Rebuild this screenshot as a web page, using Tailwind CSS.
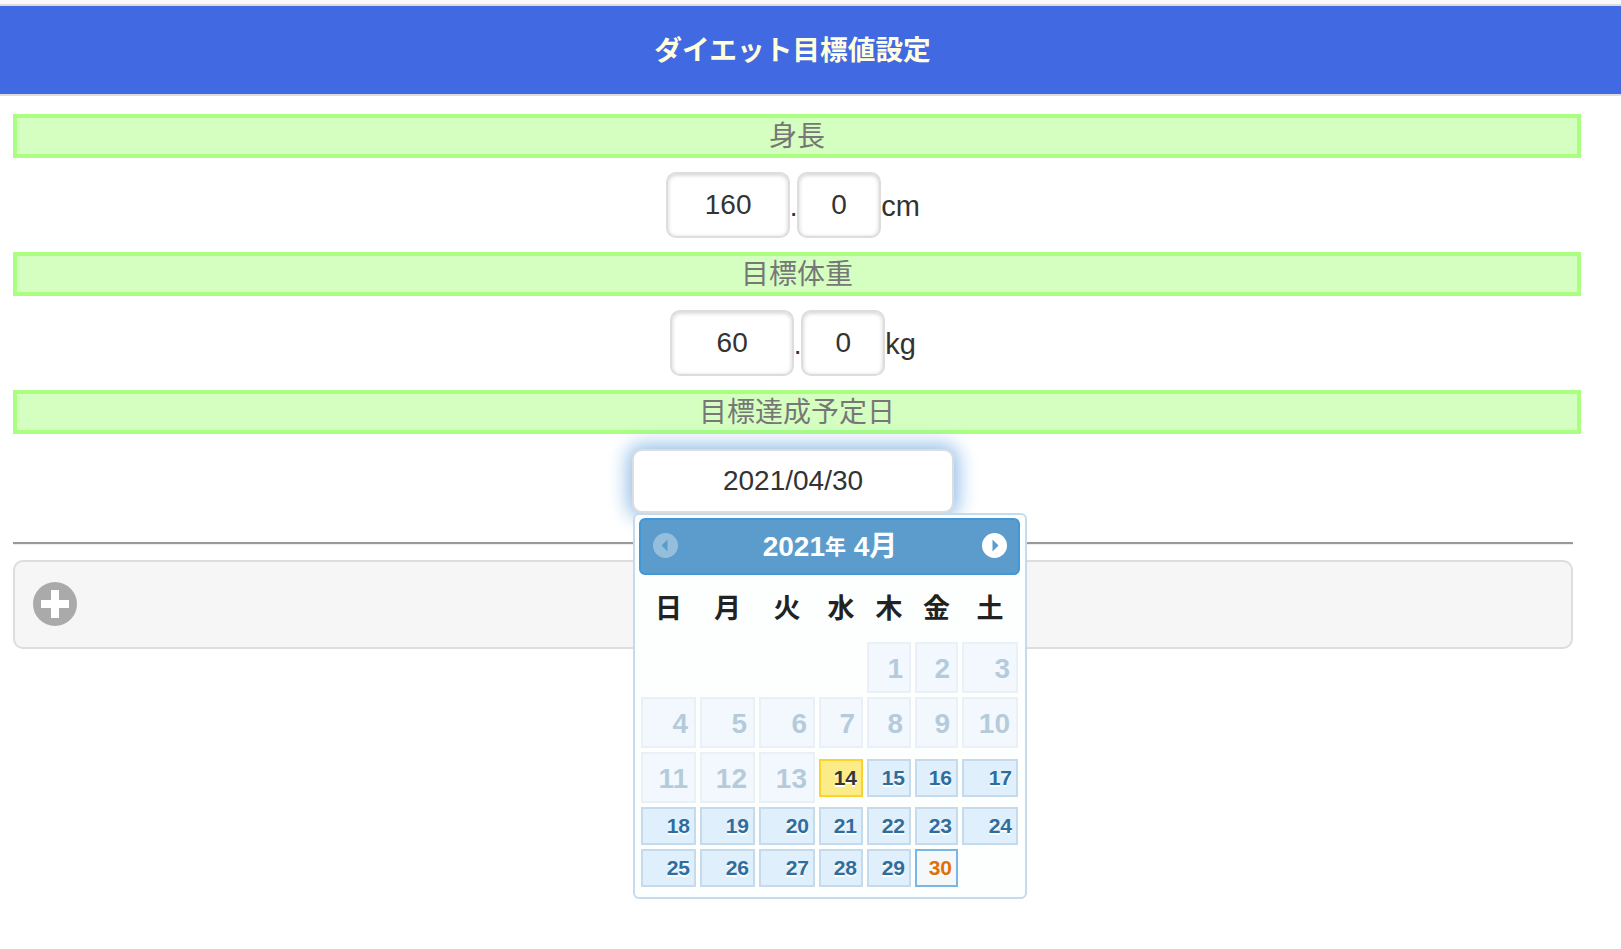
<!DOCTYPE html>
<html lang="ja">

<head>
    <meta charset="UTF-8">
    <meta name="viewport" content="width=device-width, initial-scale=1.0">
    <title>ダイエット目標値設定</title>
    <script src="https://cdn.jsdelivr.net/npm/@tailwindcss/browser@4"></script>
</head>

<body class="min-h-[949px] bg-white text-[28px] text-[#333] [font-family:'Liberation_Sans','Noto_Sans_CJK_JP',sans-serif]">
    <!-- Header -->
    <div class="h-1 bg-[#f9f9f9]"></div>
    <header class="flex h-[92px] items-center justify-center border-y-2 border-[#ddd] bg-[#4169e1] pr-[36px] pt-0.5">
        <h1 class="text-[27.7px] font-bold text-[#ffffe0]">ダイエット目標値設定</h1>
    </header>

    <!-- Main Content -->
    <main class="relative h-[853px] w-[1586px] pt-[18px]">
        <div class="ml-[13px] flex h-[44px] w-[1568px] items-center justify-center border-4 border-[#aaff80] bg-[#d5ffc0] pt-0.5 text-[#777]">身長</div>
        <div class="mt-[14px] flex h-[66px] items-center justify-center">
            <div class="flex h-full w-[124px] items-center justify-center rounded-[10px] border-2 border-[#ddd] bg-white shadow-[inset_0_1px_4px_rgba(0,0,0,0.2)]">160</div>
            <span class="flex h-full w-[7px] items-center justify-center pt-1">.</span>
            <div class="flex h-full w-[84px] items-center justify-center rounded-[10px] border-2 border-[#ddd] bg-white shadow-[inset_0_1px_4px_rgba(0,0,0,0.2)]">0</div>
            <span class="pt-1 text-[29px]">cm</span>
        </div>

        <div class="ml-[13px] mt-[14px] flex h-[44px] w-[1568px] items-center justify-center border-4 border-[#aaff80] bg-[#d5ffc0] pt-0.5 text-[#777]">目標体重</div>
        <div class="mt-[14px] flex h-[66px] items-center justify-center">
            <div class="flex h-full w-[124px] items-center justify-center rounded-[10px] border-2 border-[#ddd] bg-white shadow-[inset_0_1px_4px_rgba(0,0,0,0.2)]">60</div>
            <span class="flex h-full w-[7px] items-center justify-center pt-1">.</span>
            <div class="flex h-full w-[84px] items-center justify-center rounded-[10px] border-2 border-[#ddd] bg-white shadow-[inset_0_1px_4px_rgba(0,0,0,0.2)]">0</div>
            <span class="pt-1 text-[29px]">kg</span>
        </div>

        <div class="ml-[13px] mt-[14px] flex h-[44px] w-[1568px] items-center justify-center border-4 border-[#aaff80] bg-[#d5ffc0] pt-0.5 text-[#777]">目標達成予定日</div>
        <div class="mt-[15px] flex justify-center">
            <div class="flex h-[64px] w-[322px] items-center justify-center rounded-[10px] border-2 border-[#ddd] bg-white shadow-[0_0_20px_4px_#8dbce8]">2021/04/30</div>
        </div>

        <hr class="ml-[13px] mt-[29px] w-[1560px] border-t-2 border-b border-t-[#999] border-b-[#eee]">

        <!-- Collapsible -->
        <div class="ml-[13px] mt-[15px] flex h-[89px] w-[1560px] items-center rounded-[10px] border-2 border-[#ddd] bg-[#f6f6f6] pb-0.5 pl-[18px]">
            <svg width="44" height="44" viewBox="0 0 44 44">
                <circle cx="22" cy="22" r="22" fill="#aaa" />
                <path d="M18 8h8v10h10v8H26v10h-8V26H8v-8h10z" fill="#fff" />
            </svg>
        </div>

        <!-- Datepicker -->
        <div class="absolute left-[633px] top-[417px] h-[386px] w-[394px] rounded-md border-2 border-[#c5dbec] bg-[#fdfefe] pl-1 pr-[5px] pt-[3px]">
            <div class="flex h-[57px] items-center justify-between rounded-md border-2 border-[#4297d7] bg-[#5c9ccc] pl-3 pr-[11px] text-[28px] font-bold text-white">
                <svg class="mb-0.5 opacity-35" width="25" height="25" viewBox="0 0 25 25">
                    <circle cx="12.5" cy="12.5" r="12.5" fill="#fff" />
                    <path d="M8.5 12.5l6-6v12z" fill="#5c9ccc" />
                </svg>
                <span class="flex items-center">2021<span class="text-[21px]">年</span>&nbsp;4月</span>
                <svg class="mb-0.5" width="25" height="25" viewBox="0 0 25 25">
                    <circle cx="12.5" cy="12.5" r="12.5" fill="#fff" />
                    <path d="M16.5 12.5l-6-6v12z" fill="#5c9ccc" />
                </svg>
            </div>
            <div class="mt-[67px] grid grid-cols-[55px_55px_56px_44px_44px_43px_56px] grid-rows-[51px_51px_51px_38px_38px] gap-1 pl-0.5 font-bold" id="calendar"></div>
            <div class="absolute left-[6px] top-[74px] grid w-[378px] grid-cols-[55px_55px_56px_44px_44px_43px_56px] gap-1 text-center text-[27px] font-bold text-[#222]">
                <span>日</span><span>月</span><span>火</span><span>水</span><span>木</span><span>金</span><span>土</span>
            </div>
        </div>
    </main>

    <script>
        // Build the calendar cells
        const disabledClass = 'flex items-center justify-end border-2 border-[#c5dbec] bg-[#dfeffc] pr-1.5 pt-0.5 text-[28px] text-[#2e6e9e] opacity-35';
        const activeClass = 'flex h-[38px] self-center items-center justify-end border-2 border-[#c5dbec] bg-[#dfeffc] pr-1 text-[21px] text-[#2e6e9e] [text-shadow:0_2px_0_#fff]';
        const todayClass = 'flex h-[38px] self-center items-center justify-end border-2 border-[#fad42e] bg-[#fbec88] pr-1 text-[21px] text-[#363636] [text-shadow:0_2px_0_#fff]';
        const selectedClass = 'flex h-[38px] self-center items-center justify-end border-2 border-[#79b7e7] bg-[#f5f8f9] pr-1 text-[21px] text-[#e17009] [text-shadow:0_2px_0_#fff]';

        const calendar = document.getElementById('calendar');
        for (let i = 0; i < 4; i++) {
            calendar.appendChild(document.createElement('div'));
        }
        for (let day = 1; day <= 30; day++) {
            const cell = document.createElement('div');
            cell.textContent = day;
            if (day < 14) cell.className = disabledClass;
            else if (day === 14) cell.className = todayClass;
            else if (day === 30) cell.className = selectedClass;
            else cell.className = activeClass;
            calendar.appendChild(cell);
        }
    </script>
</body>

</html>
